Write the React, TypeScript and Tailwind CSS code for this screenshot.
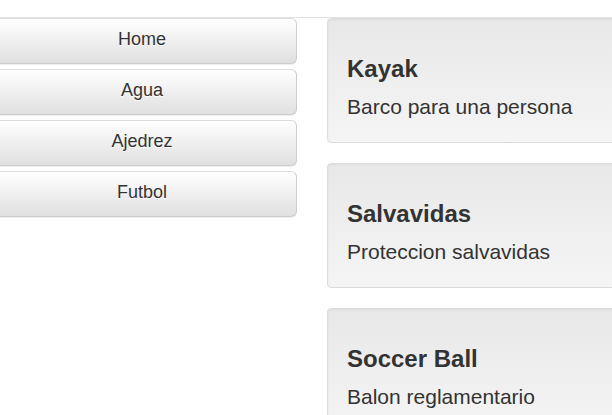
const categories = ["Home", "Agua", "Ajedrez", "Futbol"];

const products = [
  { name: "Kayak", description: "Barco para una persona" },
  { name: "Salvavidas", description: "Proteccion salvavidas" },
  { name: "Soccer Ball", description: "Balon reglamentario" },
];

const CategoryButton = ({ label }: { label: string }) => (
  <button
    type="button"
    className="block w-full h-[46px] pb-[4px] rounded-[6px] border border-[#ccc] border-t-[#dbdbdb] bg-gradient-to-b from-white to-[#e0e0e0] text-[18px] leading-[24px] text-[#333] [text-shadow:0_1px_0_#fff] shadow-[inset_0_1px_0_rgba(255,255,255,0.15),0_1px_1px_rgba(0,0,0,0.075)]"
  >
    {label}
  </button>
);

const ProductCard = ({
  name,
  description,
}: {
  name: string;
  description: string;
}) => (
  <div className="h-[125px] shrink-0 rounded-[4px] border border-[#dcdcdc] bg-gradient-to-b from-[#e8e8e8] to-[#f5f5f5] px-[19px] pt-[37px] shadow-[inset_0_1px_3px_rgba(0,0,0,0.05)]">
    <h3 className="mb-[10px] text-[24px] leading-[26.4px] font-bold text-[#333]">
      {name}
    </h3>
    <p className="text-[21px] leading-[29.4px] text-[#333]">{description}</p>
  </div>
);

export default function App() {
  return (
    <div
      className="w-[612px] h-[415px] overflow-hidden bg-white"
      style={{ fontFamily: '"Liberation Sans", Arial, sans-serif' }}
    >
      <div className="h-[18px] border-b border-[#e3e3e3]" />
      <div className="flex gap-[30px]">
        <div className="-ml-[13px] w-[310px] shrink-0 flex flex-col gap-[5px]">
          {categories.map((c) => (
            <CategoryButton key={c} label={c} />
          ))}
        </div>
        <div className="w-[330px] shrink-0 flex flex-col gap-5">
          {products.map((p) => (
            <ProductCard key={p.name} {...p} />
          ))}
        </div>
      </div>
    </div>
  );
}
